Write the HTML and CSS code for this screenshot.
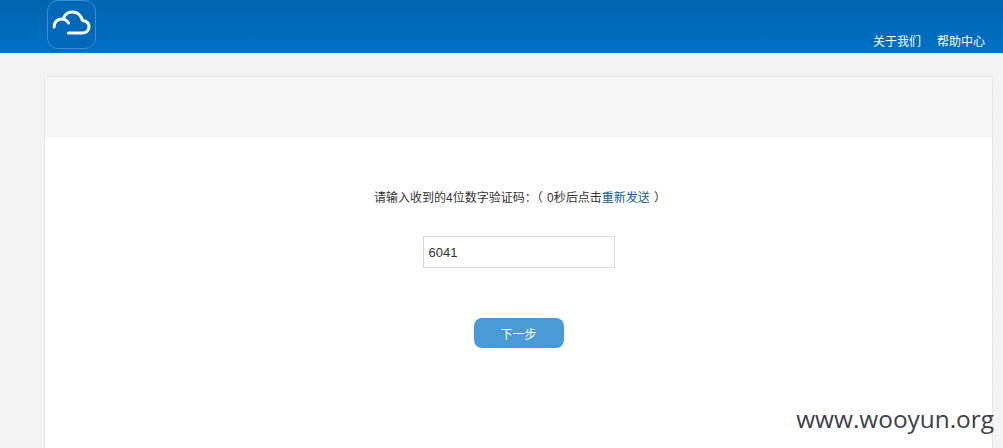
FILE: index.html
```html
<!DOCTYPE html>
<html lang="zh-CN">
<head>
  <meta charset="UTF-8">
  <title>验证码</title>
  <link rel="stylesheet" href="styles.css">
</head>
<body>
  <header class="topbar">
    <div class="logo">
      <svg width="49" height="49" viewBox="0 0 49 49" fill="none" stroke="#fff" stroke-width="3" stroke-linecap="round" stroke-linejoin="round">
        <path d="M7 27c0-5 3.500-8 7.500-8 3 0 5.500 1.300 7 4"/>
        <path d="M17 17c1.800-3.300 5-5 8.500-5 5 0 8.500 3.500 10 8.500 4 .5 6.500 3 6.500 6.300 0 3.700-3 6.200-7 6.200H21.500"/>
      </svg>
    </div>
    <nav class="topnav">
      <a href="#">关于我们</a>
      <a href="#">帮助中心</a>
    </nav>
  </header>

  <main class="card">
    <div class="card-head"></div>
    <div class="card-body">
      <p class="hint">请输入收到的4位数字验证码：（ 0秒后点击<a href="#">重新发送</a> ）</p>
      <input class="code" type="text" value="6041">
      <button class="next">下一步</button>
    </div>
  </main>

  <div class="watermark">www.wooyun.org</div>
</body>
</html>
```

FILE: styles.css
```css
* { box-sizing: border-box; }
html, body { height: 100%; overflow: hidden; }
body {
  margin: 0;
  font-family: "Liberation Sans", "Noto Sans CJK SC", sans-serif;
  font-size: 12px;
  color: #333;
  background-color: #f3f3f3;
  background-image:
    repeating-linear-gradient(0deg, rgba(0,0,0,0.006) 0 1px, transparent 1px 3px),
    repeating-linear-gradient(90deg, rgba(255,255,255,0.25) 0 1px, transparent 1px 3px);
}
a { text-decoration: none; }

.topbar {
  height: 53px;
  padding-left: 47px;
  padding-right: 18px;
  display: flex;
  justify-content: space-between;
  background: linear-gradient(#0064b0, #0070c5);
}
.logo {
  width: 49px;
  height: 49px;
  border: 1px solid #3c8ecf;
  border-radius: 11px;
  background: #0068b8;
}
.logo svg { display: block; margin: -1px; }
.topnav { display: flex; gap: 16px; align-items: flex-end; padding-bottom: 2px; }
.topnav a { color: #fff; line-height: 17px; }

.card {
  width: 949px;
  height: 420px;
  margin: 23px 0 0 44px;
  background: #fff;
  border: 1px solid #e6e6e6;
  border-radius: 3px 3px 0 0;
}
.card-head { height: 61px; background: #f6f6f6; }
.card-body { display: flex; flex-direction: column; align-items: center; padding-top: 51px; }
.hint { margin: 0 0 29px; line-height: 18px; padding-left: 3px; word-spacing: 1px; color: #333; }
.hint a { color: #0f5c9c; }
.code {
  width: 192px;
  height: 32px;
  padding: 0 5px;
  border: 1px solid #d9d9d9;
  font: 13px "Liberation Sans", sans-serif;
  color: #333;
  outline: none;
}
.next {
  width: 90px;
  height: 30px;
  margin-top: 50px;
  border: none;
  border-radius: 8px;
  background: #4a9ad8;
  color: #fff;
  font: 12px "Liberation Sans", "Noto Sans CJK SC", sans-serif;
}

.watermark {
  position: absolute;
  right: 9px;
  top: 404px;
  font: 24.4px "Open Sans", sans-serif;
  color: #3d4148;
  line-height: 30px;
}
```
